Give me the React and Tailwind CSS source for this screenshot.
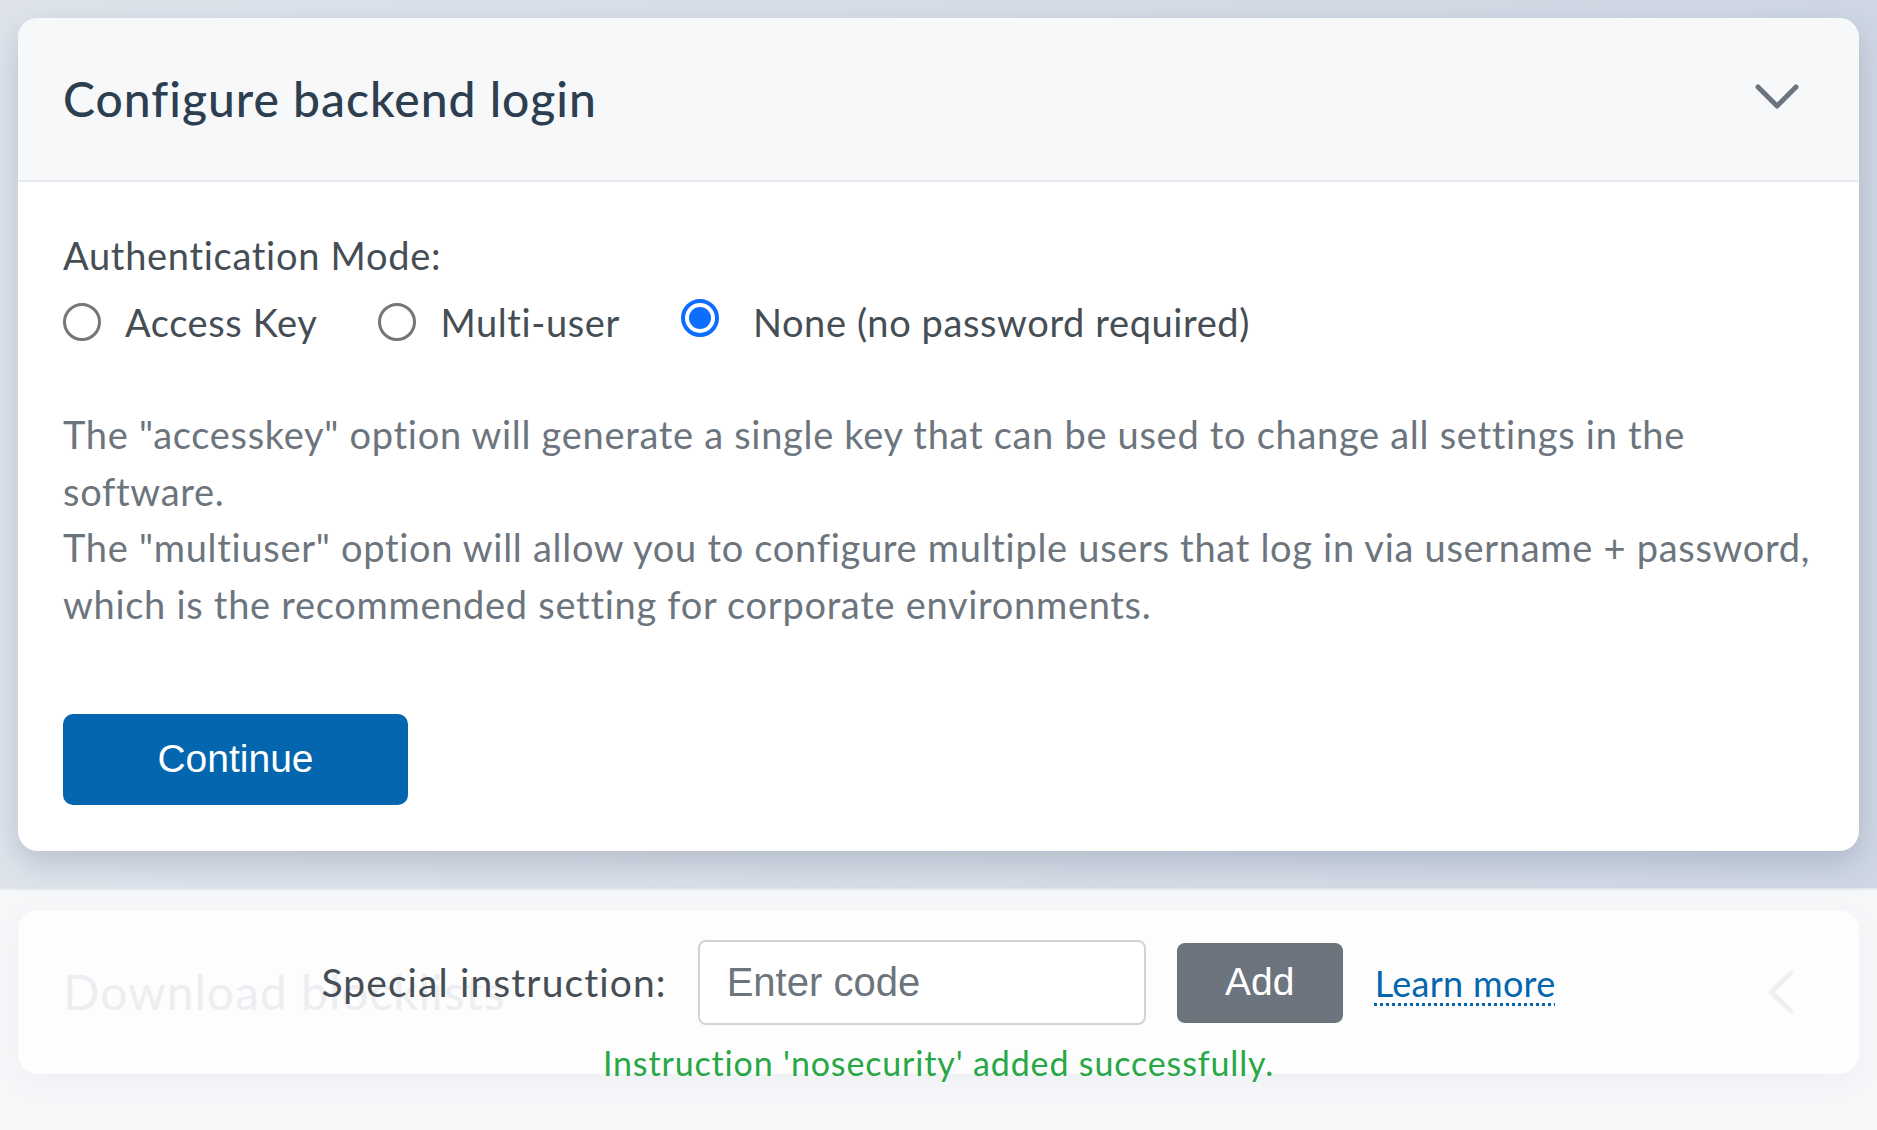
import { useState } from "react";

const Radio = ({ checked, label, onClick }) => (
  <label
    className={`flex items-center cursor-pointer ${checked ? "gap-[34px]" : "gap-[24px]"}`}
    onClick={onClick}
  >
    {checked ? (
      <span className="w-[38px] h-[38px] rounded-full border-[4px] border-[#0d6efd] flex items-center justify-center -mt-[8px]">
        <span className="w-[22px] h-[22px] rounded-full bg-[#0d6efd]"></span>
      </span>
    ) : (
      <span className="w-[38px] h-[38px] rounded-full border-[3px] border-[#767676]"></span>
    )}
    <span className="text-[38px] tracking-[0.6px] text-[#454d55]">{label}</span>
  </label>
);

export default function App() {
  const [mode, setMode] = useState("none");

  return (
    <div className="min-h-screen bg-[#f6f7f9] font-['Lato',sans-serif]">
      <div className="bg-gradient-to-r from-[#dfe4ec] to-[#cfd7e4] px-[18px] pt-[18px] pb-[37px] border-b-2 border-[#e4e8ed]">
        <div className="rounded-[20px] bg-white overflow-hidden shadow-[0_12px_30px_rgba(90,105,130,0.28)]">
          <div className="h-[164px] bg-[#f7f8fa] border-b-2 border-[#e6e9ed] flex items-center justify-between pl-[45px] pr-[59px]">
            <h2 className="text-[48px] tracking-[1px] font-medium text-[#2c3e50] leading-none">
              Configure backend login
            </h2>
            <svg className="w-[46px] h-[28px] text-[#6b7580] -mt-[4px]" viewBox="0 0 46 28" fill="none">
              <polyline points="4,4 23,23 42,4" stroke="currentColor" strokeWidth="5" strokeLinecap="round" strokeLinejoin="round" />
            </svg>
          </div>

          <div className="pl-[45px] pr-[30px] pt-[45px] pb-[46px]">
            <div className="text-[38px] tracking-[0.7px] text-[#454d55] leading-[56px]">Authentication Mode:</div>
            <div className="flex items-center gap-[61px] mt-[11px] h-[56px]">
              <Radio label="Access Key" checked={mode === "accesskey"} onClick={() => setMode("accesskey")} />
              <Radio label="Multi-user" checked={mode === "multiuser"} onClick={() => setMode("multiuser")} />
              <Radio label="None (no password required)" checked={mode === "none"} onClick={() => setMode("none")} />
            </div>

            <p className="mt-[56px] text-[38px] tracking-[0.7px] leading-[56.5px] text-[#6c757d] whitespace-nowrap">
              The "accesskey" option will generate a single key that can be used to change all settings in the
              <br />
              software.
              <br />
              The "multiuser" option will allow you to configure multiple users that log in via username + password,
              <br />
              which is the recommended setting for corporate environments.
            </p>

            <button className="mt-[82px] w-[345px] h-[91px] rounded-[10px] bg-[#0366ae] text-white text-[39px] font-['Liberation_Sans',Arial,sans-serif]">
              Continue
            </button>
          </div>
        </div>
      </div>

      <div className="relative px-[18px] pt-[20px] pb-[56px]">
        <div className="h-[164px] rounded-[20px] bg-[#fdfdfe] shadow-[0_8px_24px_rgba(120,135,160,0.06)] flex items-center justify-between pl-[45px] pr-[64px]">
          <h2 className="text-[48px] tracking-[1px] text-[#eceef1] leading-none">Download blocklists</h2>
          <svg className="w-[28px] h-[46px] text-[#eeeff1]" viewBox="0 0 28 46" fill="none">
            <polyline points="24,4 4,23 24,42" stroke="currentColor" strokeWidth="5" strokeLinecap="round" strokeLinejoin="round" />
          </svg>
        </div>

        <div className="absolute left-0 right-0 top-[50px] flex flex-col items-center">
          <div className="flex items-center">
            <span className="text-[39px] tracking-[1.1px] text-[#454d55]">Special instruction:</span>
            <input
              placeholder="Enter code"
              className="ml-[31px] w-[448px] h-[85px] rounded-[8px] border-2 border-[#ced4da] bg-white px-[27px] text-[40px] text-[#495057] placeholder:text-[#6c757d] font-['Liberation_Sans',Arial,sans-serif] outline-none"
            />
            <button className="ml-[31px] w-[166px] h-[80px] rounded-[8px] bg-[#6c757d] text-white text-[39px] font-['Liberation_Sans',Arial,sans-serif]">
              Add
            </button>
            <a
              href="#"
              className="ml-[32px] text-[36px] tracking-[0.3px] text-[#0366ae] underline decoration-dotted decoration-[3px] underline-offset-[6px]"
            >
              Learn more
            </a>
          </div>
          <div className="mt-[16px] text-[34px] tracking-[0.85px] leading-[44px] text-[#28a745]">
            Instruction 'nosecurity' added successfully.
          </div>
        </div>
      </div>
    </div>
  );
}
